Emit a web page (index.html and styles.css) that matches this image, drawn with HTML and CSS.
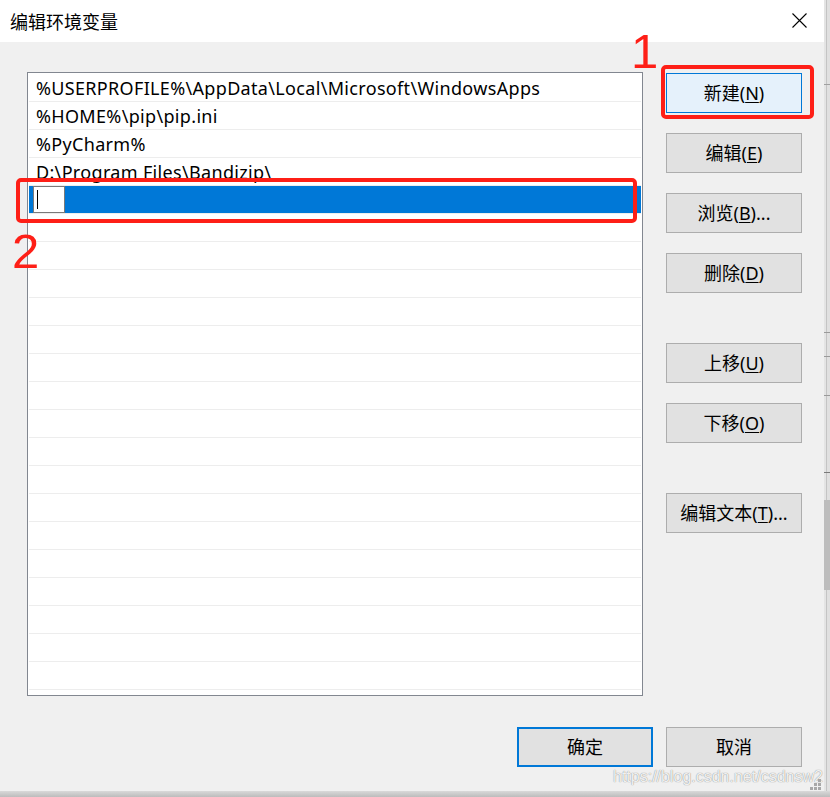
FILE: index.html
```html
<!DOCTYPE html>
<html lang="zh-CN">
<head>
<meta charset="utf-8">
<title>编辑环境变量</title>
<link rel="stylesheet" href="styles.css">
</head>
<body>
<div class="screen">
  <div class="dialog">
    <div class="titlebar">
      <span class="title">编辑环境变量</span>
      <svg class="close" width="15" height="15" viewBox="0 0 15 15"><path d="M0.5 0.5 L14.5 14.5 M14.5 0.5 L0.5 14.5" stroke="#000" stroke-width="1.1" fill="none"/></svg>
    </div>
    <div class="client">
      <div class="main">
        <div class="listbox">
          <div class="row">%USERPROFILE%\AppData\Local\Microsoft\WindowsApps</div>
          <div class="row">%HOME%\pip\pip.ini</div>
          <div class="row">%PyCharm%</div>
          <div class="row">D:\Program Files\Bandizip\</div>
          <div class="row selected"><span class="editbox"><span class="caret"></span></span></div>
          <div class="row"></div><div class="row"></div><div class="row"></div><div class="row"></div>
          <div class="row"></div><div class="row"></div><div class="row"></div><div class="row"></div>
          <div class="row"></div><div class="row"></div><div class="row"></div><div class="row"></div>
          <div class="row"></div><div class="row"></div><div class="row"></div><div class="row"></div>
          <div class="row"></div><div class="row"></div><div class="row"></div>
        </div>
        <div class="side">
          <div class="group">
            <button class="btn hover">新建(<u>N</u>)</button>
            <button class="btn">编辑(<u>E</u>)</button>
            <button class="btn">浏览(<u>B</u>)...</button>
            <button class="btn">删除(<u>D</u>)</button>
          </div>
          <div class="group">
            <button class="btn">上移(<u>U</u>)</button>
            <button class="btn">下移(<u>O</u>)</button>
          </div>
          <div class="group">
            <button class="btn">编辑文本(<u>T</u>)...</button>
          </div>
        </div>
      </div>
      <div class="footer">
        <button class="btn default">确定</button>
        <button class="btn">取消</button>
      </div>
    </div>

    <div class="mark box-new"></div>
    <div class="mark box-row"></div>
    <div class="num num1">1</div>
    <div class="num num2">2</div>
    <div class="watermark">https://blog.csdn.net/csdnsw2</div>
    <svg class="grip" width="12" height="12" viewBox="0 0 12 12">
      <rect x="9" y="1" width="3" height="3" fill="#a8a8a8"/>
      <rect x="5" y="5" width="3" height="3" fill="#a8a8a8"/>
      <rect x="9" y="5" width="3" height="3" fill="#a8a8a8"/>
      <rect x="1" y="9" width="3" height="3" fill="#a8a8a8"/>
      <rect x="5" y="9" width="3" height="3" fill="#a8a8a8"/>
      <rect x="9" y="9" width="3" height="3" fill="#a8a8a8"/>
    </svg>
  </div>
  <div class="strip"></div>
</div>
<div class="shadow"></div>
</body>
</html>
```
FILE: styles.css
```css
html, body {
  margin: 0;
  padding: 0;
}
body {
  width: 830px;
  height: 797px;
  overflow: hidden;
  background: #f0f0f0;
  font-family: "Noto Sans", "Noto Sans CJK SC", sans-serif;
  font-size: 18px;
  color: #000;
}
.screen {
  display: flex;
  height: 791px;
}
.dialog {
  position: relative;
  width: 824px;
  height: 791px;
  background: #f0f0f0;
  display: flex;
  flex-direction: column;
}
.strip {
  width: 6px;
  height: 791px;
  background:
    linear-gradient(to bottom, transparent 84px, #a0a0a0 84px, #a0a0a0 85px, transparent 85px,
      transparent 332px, #9a9a9a 332px, #9a9a9a 333px, transparent 333px,
      transparent 356px, #9a9a9a 356px, #9a9a9a 357px, transparent 357px,
      transparent 395px, #9a9a9a 395px, #9a9a9a 396px, transparent 396px,
      transparent 472px, #7a7a7a 472px, #7a7a7a 473px, transparent 473px,
      transparent 500px, #bdbdbd 500px, #bdbdbd 590px, transparent 590px),
    linear-gradient(to right, #e4e4e4 0, #e4e4e4 2px, #c4c4c4 2px, #c4c4c4 3px, #e0e0e0 3px);
}
.shadow {
  height: 6px;
  background: linear-gradient(to bottom, #d9d9d9, #bcbcbc);
}
.titlebar {
  height: 42px;
  background: #fff;
  display: flex;
  align-items: center;
  justify-content: space-between;
  padding: 0 17px 0 10px;
  flex: none;
}
.title {
  font-family: "Noto Sans CJK SC", sans-serif;
  font-size: 18px;
  line-height: 20px;
  margin-top: -1px;
}
.close {
  display: block;
  margin-top: -1px;
}
.client {
  flex: 1;
  display: flex;
  flex-direction: column;
  padding: 30px 22px 0 27px;
}
.main {
  display: flex;
  gap: 23px;
}
.listbox {
  box-sizing: border-box;
  width: 616px;
  height: 624px;
  border: 1px solid #828790;
  background: #fff;
  padding: 1px 1px 0 1px;
  overflow: hidden;
}
.row {
  height: 27px;
  border-bottom: 1px solid #ededed;
  line-height: 28px;
  padding-left: 7px;
  letter-spacing: 0.33px;
  white-space: nowrap;
}
.row.selected {
  background: #0078d7;
  padding-left: 4px;
  display: flex;
}
.editbox {
  box-sizing: border-box;
  width: 32px;
  height: 27px;
  background: #fff;
  border: 1px solid #7a7a7a;
  display: flex;
  align-items: center;
  padding-left: 3px;
}
.caret {
  width: 1px;
  height: 19px;
  background: #000;
}
.side {
  width: 136px;
  padding-top: 1px;
  display: flex;
  flex-direction: column;
  gap: 50px;
}
.group {
  display: flex;
  flex-direction: column;
  gap: 20px;
}
.btn {
  box-sizing: border-box;
  width: 136px;
  height: 40px;
  margin: 0;
  padding: 0;
  background: #e1e1e1;
  border: 1px solid #adadad;
  border-radius: 0;
  font-family: "Noto Sans", "Noto Sans CJK SC", sans-serif;
  font-size: 18px;
  color: #000;
  line-height: 20px;
}
.btn u {
  text-underline-offset: 2px;
}
.btn.hover {
  background: #e5f1fb;
  border-color: #0078d7;
}
.btn.default {
  border: 2px solid #0078d7;
}
.footer {
  margin-top: 31px;
  display: flex;
  justify-content: flex-end;
  gap: 13px;
}
.mark {
  position: absolute;
  box-sizing: border-box;
  border: 4px solid #fe1f17;
  border-radius: 5px;
}
.box-new {
  left: 661px;
  top: 65px;
  width: 153px;
  height: 54px;
}
.box-row {
  left: 16px;
  top: 178px;
  width: 621px;
  height: 45px;
}
.num {
  position: absolute;
  font-family: "Liberation Sans", Arial, sans-serif;
  font-size: 49px;
  line-height: 49px;
  color: #fe1f17;
}
.num1 {
  left: 631px;
  top: 27px;
}
.num2 {
  left: 12px;
  top: 227px;
}
.watermark {
  position: absolute;
  left: 613px;
  top: 767px;
  font-family: "Liberation Sans", Arial, sans-serif;
  font-size: 16px;
  line-height: 20px;
  color: rgba(255, 255, 255, 0.9);
  text-shadow: 0 0 1px rgba(0, 0, 0, 0.35), 0 0 1px rgba(0, 0, 0, 0.25);
}
.grip {
  position: absolute;
  left: 809px;
  top: 778px;
}
```
